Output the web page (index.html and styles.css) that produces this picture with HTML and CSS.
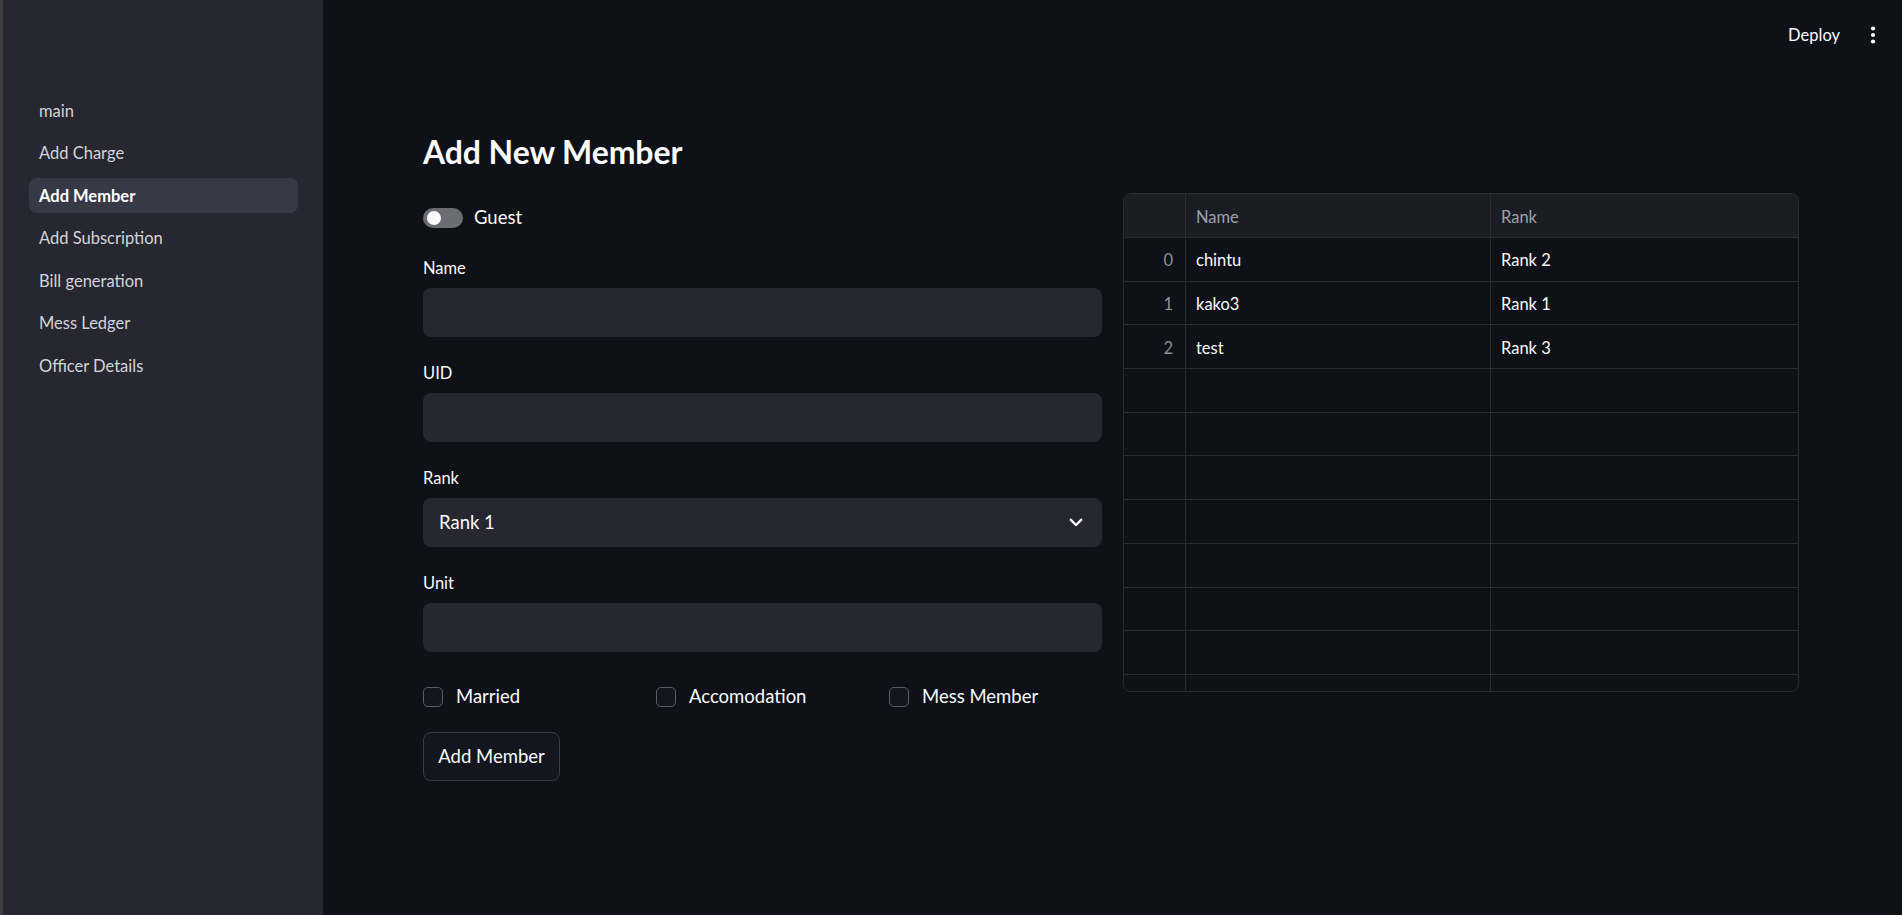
FILE: index.html
```html
<!DOCTYPE html>
<html lang="en">
<head>
<meta charset="utf-8">
<title>Add Member</title>
<link rel="stylesheet" href="styles.css">
</head>
<body>
<aside class="sidebar">
  <nav class="nav">
    <a class="nav-item">main</a>
    <a class="nav-item">Add Charge</a>
    <a class="nav-item active">Add Member</a>
    <a class="nav-item">Add Subscription</a>
    <a class="nav-item">Bill generation</a>
    <a class="nav-item">Mess Ledger</a>
    <a class="nav-item">Officer Details</a>
  </nav>
</aside>
<main class="main">
  <header class="topbar">
    <span class="deploy">Deploy</span>
    <span class="kebab">
      <svg width="24" height="24" viewBox="0 0 24 24"><circle cx="12" cy="5.5" r="2.1" fill="#fafafa"/><circle cx="12" cy="12" r="2.1" fill="#fafafa"/><circle cx="12" cy="18.5" r="2.1" fill="#fafafa"/></svg>
    </span>
  </header>
  <section class="content">
    <h1 class="title">Add New Member</h1>
    <div class="columns">
      <div class="form">
        <div class="toggle-row">
          <span class="toggle"><span class="knob"></span></span>
          <span class="toggle-label">Guest</span>
        </div>
        <div class="field">
          <label class="label">Name</label>
          <div class="input"></div>
        </div>
        <div class="field">
          <label class="label">UID</label>
          <div class="input"></div>
        </div>
        <div class="field">
          <label class="label">Rank</label>
          <div class="input select">
            <span>Rank 1</span>
            <svg class="chev" width="14" height="9" viewBox="0 0 14 9"><polyline points="1.8,1.8 7,7 12.2,1.8" fill="none" stroke="#fafafa" stroke-width="2.4" stroke-linecap="round" stroke-linejoin="round"/></svg>
          </div>
        </div>
        <div class="field">
          <label class="label">Unit</label>
          <div class="input"></div>
        </div>
        <div class="checks">
          <div class="check"><span class="box"></span><span class="check-label">Married</span></div>
          <div class="check"><span class="box"></span><span class="check-label">Accomodation</span></div>
          <div class="check"><span class="box"></span><span class="check-label">Mess Member</span></div>
        </div>
        <button class="btn">Add Member</button>
      </div>
      <div class="table">
        <div class="row head">
          <div class="cell idx"></div>
          <div class="cell">Name</div>
          <div class="cell">Rank</div>
        </div>
        <div class="row"><div class="cell idx">0</div><div class="cell">chintu</div><div class="cell">Rank 2</div></div>
        <div class="row"><div class="cell idx">1</div><div class="cell">kako3</div><div class="cell">Rank 1</div></div>
        <div class="row"><div class="cell idx">2</div><div class="cell">test</div><div class="cell">Rank 3</div></div>
        <div class="row"><div class="cell idx"></div><div class="cell"></div><div class="cell"></div></div>
        <div class="row"><div class="cell idx"></div><div class="cell"></div><div class="cell"></div></div>
        <div class="row"><div class="cell idx"></div><div class="cell"></div><div class="cell"></div></div>
        <div class="row"><div class="cell idx"></div><div class="cell"></div><div class="cell"></div></div>
        <div class="row"><div class="cell idx"></div><div class="cell"></div><div class="cell"></div></div>
        <div class="row"><div class="cell idx"></div><div class="cell"></div><div class="cell"></div></div>
        <div class="row"><div class="cell idx"></div><div class="cell"></div><div class="cell"></div></div>
        <div class="row"><div class="cell idx"></div><div class="cell"></div><div class="cell"></div></div>
      </div>
    </div>
  </section>
</main>
</body>
</html>
```
FILE: styles.css
```css
* { box-sizing: border-box; }
html, body { margin: 0; padding: 0; }
body {
  display: flex;
  height: 100vh;
  overflow: hidden;
  background: #0e1117;
  color: #fafafa;
  font-family: Lato, "Liberation Sans", sans-serif;
}
.sidebar {
  width: 323px;
  flex: 0 0 323px;
  background: #262730;
  border-left: 3px solid #3d3d42;
  padding: 93px 25px 0 26px;
}
.nav { display: flex; flex-direction: column; gap: 7.5px; }
.nav-item {
  display: flex;
  align-items: center;
  height: 35px;
  padding-left: 10px;
  border-radius: 8px;
  font-size: 16.5px;
  color: #d3d4d8;
}
.nav-item.active {
  background: #373a46;
  color: #ffffff;
  font-weight: 700;
}
.main { flex: 1; display: flex; flex-direction: column; }
.topbar {
  height: 70px;
  display: flex;
  align-items: center;
  justify-content: flex-end;
  padding-right: 17px;
  gap: 21px;
}
.deploy { font-size: 16.5px; color: #fafafa; }
.kebab { display: flex; width: 24px; height: 24px; }
.content { padding: 62px 103px 0 100px; }
.title {
  margin: 0;
  height: 40px;
  line-height: 40px;
  font-size: 32px;
  font-weight: 700;
  letter-spacing: -0.1px;
}
.columns {
  margin-top: 21px;
  display: grid;
  grid-template-columns: 679px 676px;
  gap: 21px;
  align-items: start;
}
.form { padding-top: 15px; display: flex; flex-direction: column; }
.toggle-row { display: flex; align-items: center; height: 20px; gap: 11px; margin-bottom: 29px; }
.toggle {
  width: 40px; height: 20px; border-radius: 10px;
  background: #6b6c74; display: flex; align-items: center; padding-left: 4px;
}
.knob { width: 14px; height: 14px; border-radius: 50%; background: #fafafa; }
.toggle-label { font-size: 18.5px; padding-bottom: 2px; }
.field { display: flex; flex-direction: column; margin-bottom: 25px; }
.field:nth-of-type(5) { margin-bottom: 0; }
.label { font-size: 16.5px; line-height: 22px; margin-bottom: 9px; }
.input {
  height: 49px;
  background: #262730;
  border-radius: 8px;
  padding: 0 16px;
  font-size: 18.5px;
}
.select { display: flex; align-items: center; justify-content: space-between; padding-right: 19px; }
.select span { padding-bottom: 1px; }
.checks {
  margin-top: 35px;
  display: grid;
  grid-template-columns: repeat(3, 1fr);
  gap: 20px;
  height: 20px;
}
.check { display: flex; align-items: center; gap: 13px; font-size: 18.5px; height: 20px; }
.check-label { padding-bottom: 2px; }
.box {
  width: 20px; height: 20px; flex: 0 0 20px;
  border: 1px solid #5b5d66; border-radius: 5px; background: #13161e;
}
.btn {
  margin-top: 25px;
  align-self: flex-start;
  height: 49px;
  width: 137px;
  border: 1px solid #3b3d45;
  border-radius: 8px;
  background: #13161e;
  color: #fafafa;
  font-family: inherit;
  font-size: 18.5px;
  padding: 0 0 2px;
}
.table {
  height: 499px;
  border: 1px solid #2a2c33;
  border-radius: 8px;
  overflow: hidden;
  font-size: 16.5px;
}
.row {
  display: grid;
  grid-template-columns: 62px 305px 1fr;
  height: 43.7px;
  border-bottom: 1px solid #2a2c33;
}
.row.head { height: 44px; background: #1b1d25; color: #9ea1aa; }
.cell {
  display: flex;
  align-items: center;
  padding: 2px 10px 0;
  border-right: 1px solid #2a2c33;
}
.cell:last-child { border-right: none; }
.cell.idx { justify-content: flex-end; padding-right: 12px; color: #8d9099; }
```
